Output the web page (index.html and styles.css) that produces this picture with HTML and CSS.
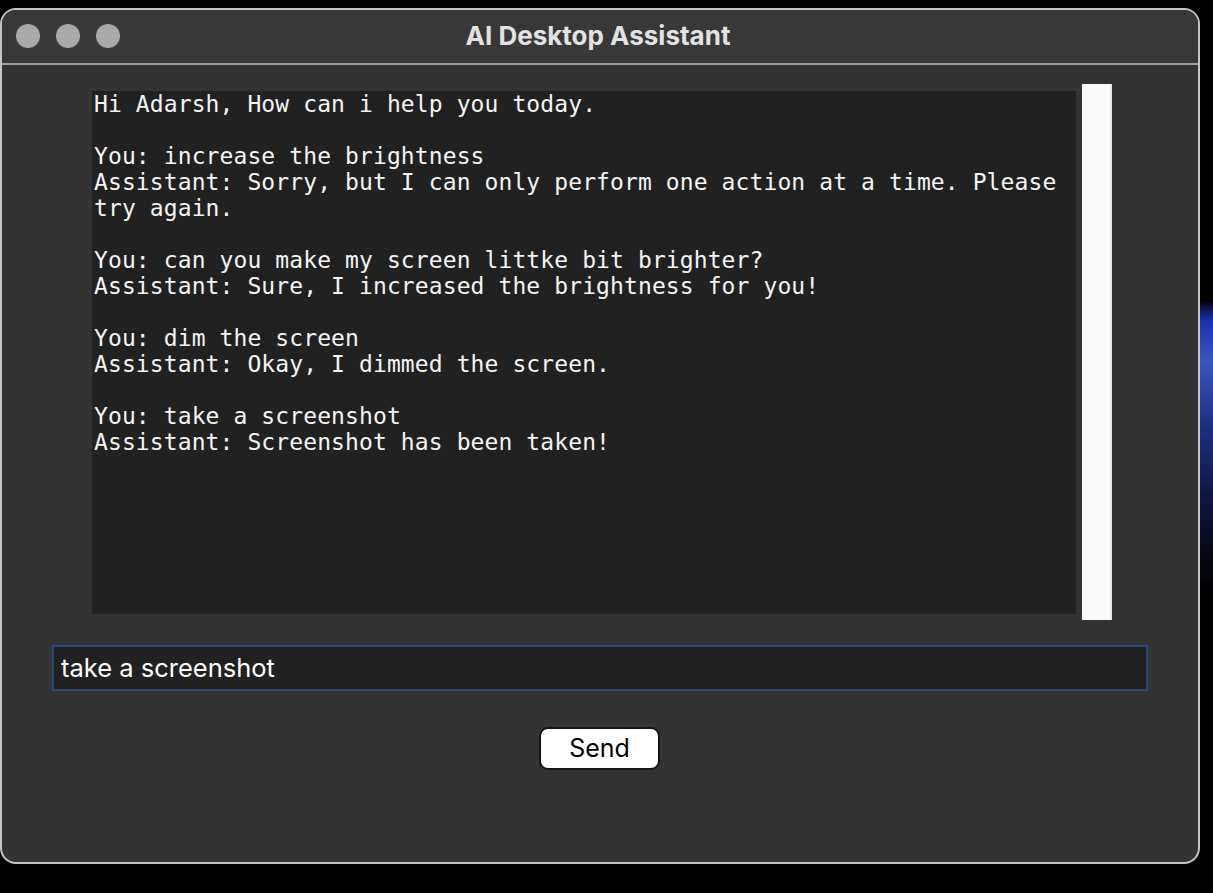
FILE: index.html
```html
<!DOCTYPE html>
<html lang="en">
<head>
<meta charset="utf-8">
<title>AI Desktop Assistant</title>
<link rel="stylesheet" href="styles.css">
</head>
<body>
<div class="window">
  <div class="titlebar">
    <div class="lights">
      <span class="light"></span>
      <span class="light"></span>
      <span class="light"></span>
    </div>
    <div class="title">AI Desktop Assistant</div>
  </div>
  <div class="content">
    <div class="chat-row">
      <pre class="chat">Hi Adarsh, How can i help you today.

You: increase the brightness
Assistant: Sorry, but I can only perform one action at a time. Please
try again.

You: can you make my screen littke bit brighter?
Assistant: Sure, I increased the brightness for you!

You: dim the screen
Assistant: Okay, I dimmed the screen.

You: take a screenshot
Assistant: Screenshot has been taken!</pre>
      <div class="scrollbar"></div>
    </div>
    <div class="input-row">
      <input class="entry" type="text" value="take a screenshot">
    </div>
    <div class="button-row">
      <button class="send" type="button">Send</button>
    </div>
  </div>
</div>
</body>
</html>
```
FILE: styles.css
```css
html, body {
  margin: 0;
  padding: 0;
}
body {
  width: 1213px;
  height: 893px;
  overflow: hidden;
  padding-top: 8px;
  box-sizing: border-box;
  background-color: #030306;
  background-image: linear-gradient(to bottom, #000 0px, #1a2fae 20px, #3a56c0 60px, #1c2d80 130px, #0c1640 200px, #05070f 260px);
  background-repeat: no-repeat;
  background-size: 13px 280px;
  background-position: right 0 top 300px;
}
.window {
  width: 1200px;
  height: 856px;
  box-sizing: border-box;
  border: 2px solid #c4c4c4;
  border-radius: 16px;
  background: #333333;
  overflow: hidden;
  display: flex;
  flex-direction: column;
}
.titlebar {
  height: 53px;
  flex: none;
  background: #383838;
  border-bottom: 2px solid #9c9c9c;
  position: relative;
  display: flex;
  align-items: center;
  justify-content: center;
}
.lights {
  position: absolute;
  left: 14px;
  top: 14px;
  display: flex;
  gap: 16px;
}
.light {
  width: 24px;
  height: 24px;
  border-radius: 50%;
  background: #a9a9a9;
}
.title {
  font-family: Inter, "Liberation Sans", sans-serif;
  font-weight: 700;
  font-size: 26px;
  color: #e2e2e2;
  margin-top: -3px;
  margin-left: -4px;
}
.content {
  flex: 1;
  display: flex;
  flex-direction: column;
}
.chat-row {
  margin-top: 19px;
  padding-left: 90px;
  display: flex;
  align-items: center;
  gap: 6px;
}
.chat {
  margin: 0;
  width: 984px;
  height: 523px;
  box-sizing: border-box;
  padding: 0 0 0 2px;
  background: #212121;
  color: #f4f4f4;
  font-family: "DejaVu Sans Mono", "Liberation Mono", monospace;
  font-size: 23px;
  letter-spacing: 0.1px;
  line-height: 26px;
  white-space: pre;
  overflow: hidden;
}
.scrollbar {
  width: 30px;
  height: 536px;
  box-sizing: border-box;
  background: #fafafa;
  border-right: 2px solid #e6e6e6;
}
.input-row {
  margin-top: 25px;
  padding-left: 50px;
}
.entry {
  width: 1096px;
  height: 46px;
  box-sizing: border-box;
  margin: 0;
  border: 2px solid #2b4670;
  box-shadow: 0 0 0 1px rgba(40, 70, 120, 0.35);
  background: #212121;
  color: #ffffff;
  font-family: Inter, "Liberation Sans", sans-serif;
  font-size: 25.5px;
  padding: 0 0 2px 7px;
  outline: none;
}
.button-row {
  margin-top: 36px;
  display: flex;
  justify-content: center;
}
.send {
  width: 121px;
  height: 43px;
  box-sizing: border-box;
  border: 2px solid #151515;
  border-radius: 9px;
  background: #ffffff;
  color: #000000;
  font-family: Inter, "Liberation Sans", sans-serif;
  font-size: 25px;
  padding: 0 0 2px 0;
  margin-right: 1px;
}
```
